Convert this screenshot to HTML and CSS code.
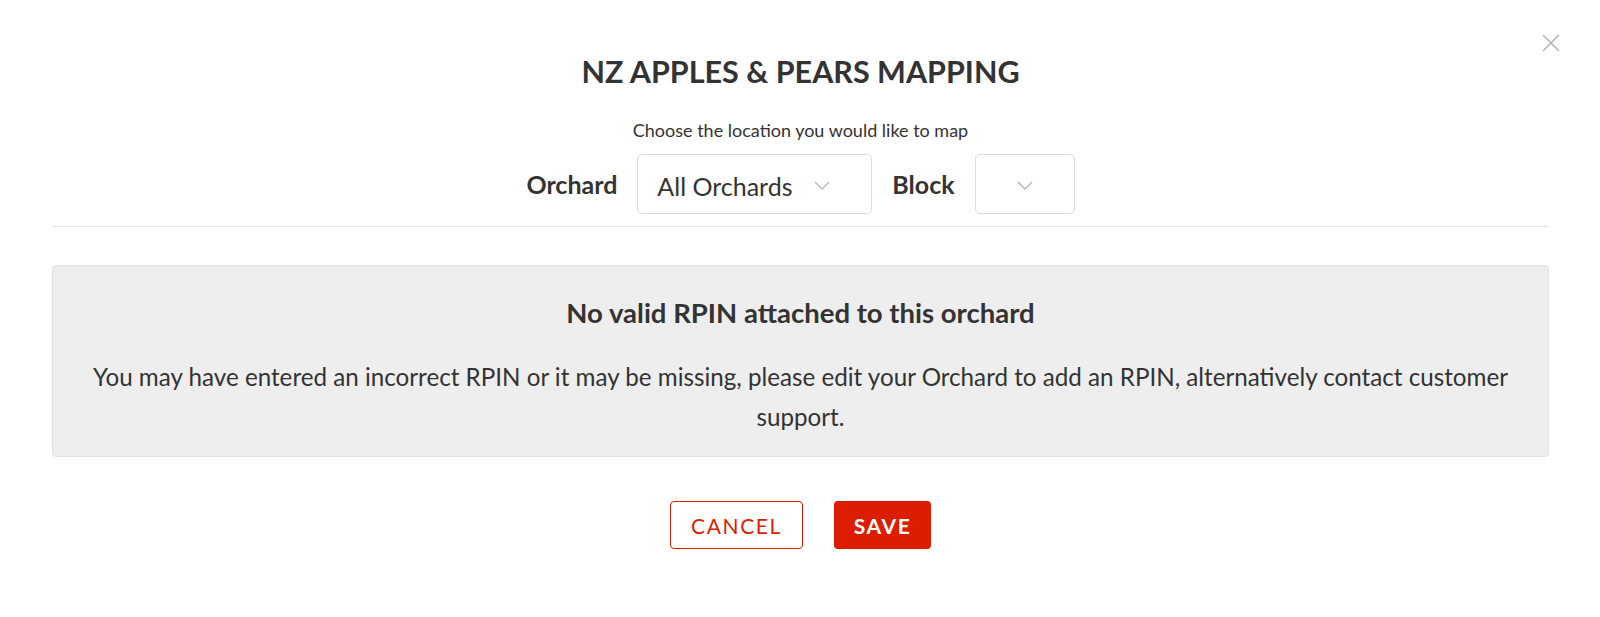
FILE: index.html
```html
<!DOCTYPE html>
<html lang="en">
<head>
    <meta charset="UTF-8">
    <meta name="viewport" content="width=device-width, initial-scale=1.0">
    <title>NZ Apples &amp; Pears Mapping</title>
    <link rel="stylesheet" href="styles.css">
</head>
<body>
    <div class="modal">
        <button class="close-button" aria-label="Close">
            <svg width="18" height="18" viewBox="0 0 18 18">
                <path d="M1 1 L17 17 M17 1 L1 17" stroke="#b3b3b3" stroke-width="1.6" fill="none"/>
            </svg>
        </button>

        <div class="modal-header">
            <h1>NZ APPLES &amp; PEARS MAPPING</h1>
            <p class="subtitle">Choose the location you would like to map</p>
            <div class="location-row">
                <label class="field-label">Orchard</label>
                <div class="select select-orchard">
                    <span>All Orchards</span>
                    <svg class="chevron" width="16" height="9" viewBox="0 0 16 9">
                        <path d="M1 1 L8 8 L15 1" stroke="#b8b8b8" stroke-width="1.4" fill="none"/>
                    </svg>
                </div>
                <label class="field-label">Block</label>
                <div class="select select-block">
                    <svg class="chevron" width="16" height="9" viewBox="0 0 16 9">
                        <path d="M1 1 L8 8 L15 1" stroke="#b8b8b8" stroke-width="1.4" fill="none"/>
                    </svg>
                </div>
            </div>
        </div>

        <div class="message-box">
            <h2>No valid RPIN attached to this orchard</h2>
            <p>You may have entered an incorrect RPIN or it may be missing, please edit your Orchard to add an RPIN, alternatively contact customer support.</p>
        </div>

        <div class="actions">
            <button class="btn btn-outline">CANCEL</button>
            <button class="btn btn-solid">SAVE</button>
        </div>
    </div>
</body>
</html>
```

FILE: styles.css
```css
body {
    font-family: Lato, "Open Sans", sans-serif;
    margin: 0;
    padding: 0;
    background: #fff;
    color: #333;
}
.modal {
    position: relative;
    padding: 0 51px 0 52px;
}
.close-button {
    position: absolute;
    top: 34px;
    right: 40px;
    background: none;
    border: none;
    padding: 0;
    cursor: pointer;
}
.modal-header {
    text-align: center;
    padding-top: 50px;
    padding-bottom: 12px;
    border-bottom: 1px solid #e2e2e2;
}
h1 {
    font-size: 30.5px;
    font-weight: 700;
    margin: 0;
    line-height: 42px;
}
.subtitle {
    font-size: 18px;
    margin: 27px 0 0 0;
    line-height: 22px;
}
.location-row {
    display: flex;
    justify-content: center;
    align-items: center;
    gap: 20px;
    margin-top: 13px;
}
.field-label {
    font-size: 25px;
    font-weight: 700;
}
.select {
    display: flex;
    align-items: center;
    height: 60px;
    border: 1px solid #dcdcdc;
    border-radius: 5px;
    box-sizing: border-box;
    font-size: 25px;
}
.select-orchard {
    width: 235px;
    padding: 3px 41px 0 19px;
    justify-content: space-between;
}
.select-block {
    width: 100px;
    padding-top: 3px;
    justify-content: center;
}
.chevron {
    display: block;
}
.message-box {
    margin-top: 38px;
    background: #eeeeee;
    border: 1px solid #e2e2e2;
    border-radius: 4px;
    text-align: center;
    padding: 30px 38px 19px;
}
.message-box h2 {
    font-size: 27.5px;
    font-weight: 700;
    margin: 0;
    line-height: 34px;
}
.message-box p {
    font-size: 24.2px;
    margin: 27px 0 0 0;
    line-height: 40px;
}
.actions {
    display: flex;
    justify-content: center;
    gap: 31px;
    margin-top: 44px;
}
.btn {
    font-family: Lato, sans-serif;
    font-size: 21px;
    letter-spacing: 1.6px;
    height: 48px;
    border-radius: 4px;
    cursor: pointer;
}
.btn-outline {
    width: 133px;
    background: #fff;
    color: #dd1d00;
    border: 1px solid #dd1d00;
}
.btn-solid {
    width: 97px;
    background: #dd1d00;
    color: #fff;
    border: none;
    font-weight: 700;
}
```
